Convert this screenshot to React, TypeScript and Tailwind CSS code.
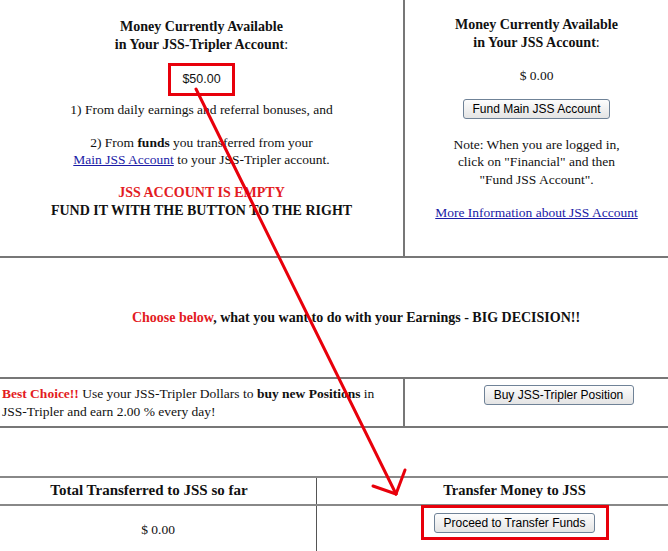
export default function App() {
  const serif = "font-['Liberation_Serif','Times_New_Roman',serif]"
  const btn =
    "font-['Liberation_Sans',Arial,sans-serif] text-[12px] leading-[14px] text-black whitespace-nowrap px-[8px] h-[20px] rounded-[3px] border border-[#6f8297] bg-gradient-to-b from-[#fdfdfd] to-[#e4e4e4]"

  return (
    <div className="relative w-[668px] h-[551px] overflow-hidden bg-white">
      <div className={`w-[712px] text-[13.5px] leading-[17.5px] text-[#111] ${serif}`}>

        {/* Top: two account boxes */}
        <div className="flex h-[258px] border-b-2 border-[#777]">
          <div className="w-[405px] border-r-2 border-[#777] flex flex-col items-center pt-[18px] text-center">
            <p className="font-bold text-[14px] leading-[18px]">Money Currently Available</p>
            <p className="font-bold text-[14px] leading-[18px]">
              in Your JSS-Tripler Account<span className="font-normal">:</span>
            </p>
            <div className="mt-[9px] w-[67px] h-[33px] border-[3px] border-[#e8000b] flex items-center justify-center font-['Liberation_Sans',Arial,sans-serif] text-[12.5px]">
              $50.00
            </div>
            <p className="mt-[5px]">1) From daily earnings and referral bonuses, and</p>
            <p className="mt-[15px]">
              2) From <b>funds</b> you transferred from your
            </p>
            <p>
              <a className="text-[#1a1aa6] underline">Main JSS Account</a> to your JSS-Tripler account.
            </p>
            <p className="mt-[15px] font-bold text-[14px] text-[#e31b23] leading-[18px]">JSS ACCOUNT IS EMPTY</p>
            <p className="font-bold text-[14px] leading-[18px]">FUND IT WITH THE BUTTON TO THE RIGHT</p>
          </div>

          <div className="w-[263px] flex flex-col items-center pt-[16px] text-center">
            <p className="font-bold text-[14px] leading-[18px]">Money Currently Available</p>
            <p className="font-bold text-[14px] leading-[18px]">
              in Your JSS Account<span className="font-normal">:</span>
            </p>
            <p className="mt-[15px]">$ 0.00</p>
            <button className={`mt-[14px] ${btn}`}>Fund Main JSS Account</button>
            <p className="mt-[17px]">Note: When you are logged in,</p>
            <p>click on "Financial" and then</p>
            <p>"Fund JSS Account".</p>
            <a className="mt-[16px] text-[#1a1aa6] underline">More Information about JSS Account</a>
          </div>
        </div>

        {/* Decision banner */}
        <div className="h-[121px] flex items-center justify-center border-b-2 border-[#777]">
          <p className="font-bold text-[14px]">
            <span className="text-[#e31b23]">Choose below</span>, what you want to do with your Earnings - BIG DECISION!!
          </p>
        </div>

        {/* Buy position row */}
        <div className="flex h-[49px] border-b-2 border-[#777]">
          <div className="w-[405px] border-r-2 border-[#777] flex items-center pl-[2px] pr-[8px]">
            <p>
              <b className="text-[#e31b23]">Best Choice!!</b> Use your JSS-Tripler Dollars to <b>buy new Positions</b> in{' '}
              <span className="whitespace-nowrap">JSS-Tripler</span> and earn 2.00 % every day!
            </p>
          </div>
          <div className="flex-1 flex justify-center pt-[6px]">
            <button className={`w-[150px] ${btn}`}>Buy JSS-Tripler Position</button>
          </div>
        </div>

        {/* Transfer table */}
        <div className="mt-[48px] border-t-2 border-[#888]">
          <div className="flex h-[28px] border-b-2 border-[#888] font-bold">
            <div className="w-[317px] border-r border-[#555] flex items-center justify-center pr-[18px] text-[15px]">
              Total Transferred to JSS so far
            </div>
            <div className="flex-1 flex items-center justify-center text-[14.5px]">Transfer Money to JSS</div>
          </div>
          <div className="flex h-[60px]">
            <div className="w-[317px] border-r border-[#555] flex justify-center pt-[15px]">$ 0.00</div>
            <div className="flex-1 flex justify-center">
              <div className="w-[188px] h-[35px] border-[3px] border-[#e8000b] flex items-center justify-center -mt-[1px]">
                <button className={`w-[161px] ${btn}`}>Proceed to Transfer Funds</button>
              </div>
            </div>
          </div>
        </div>
      </div>

      {/* Red annotation arrow */}
      <svg className="absolute inset-0 pointer-events-none" width="668" height="551" viewBox="0 0 668 551">
        <g stroke="#e8000b" strokeWidth="3" fill="none" strokeLinecap="round">
          <line x1="196" y1="89" x2="396" y2="494" />
          <line x1="405" y1="470" x2="396" y2="494" />
          <line x1="373" y1="486" x2="396" y2="494" />
        </g>
      </svg>
    </div>
  )
}
